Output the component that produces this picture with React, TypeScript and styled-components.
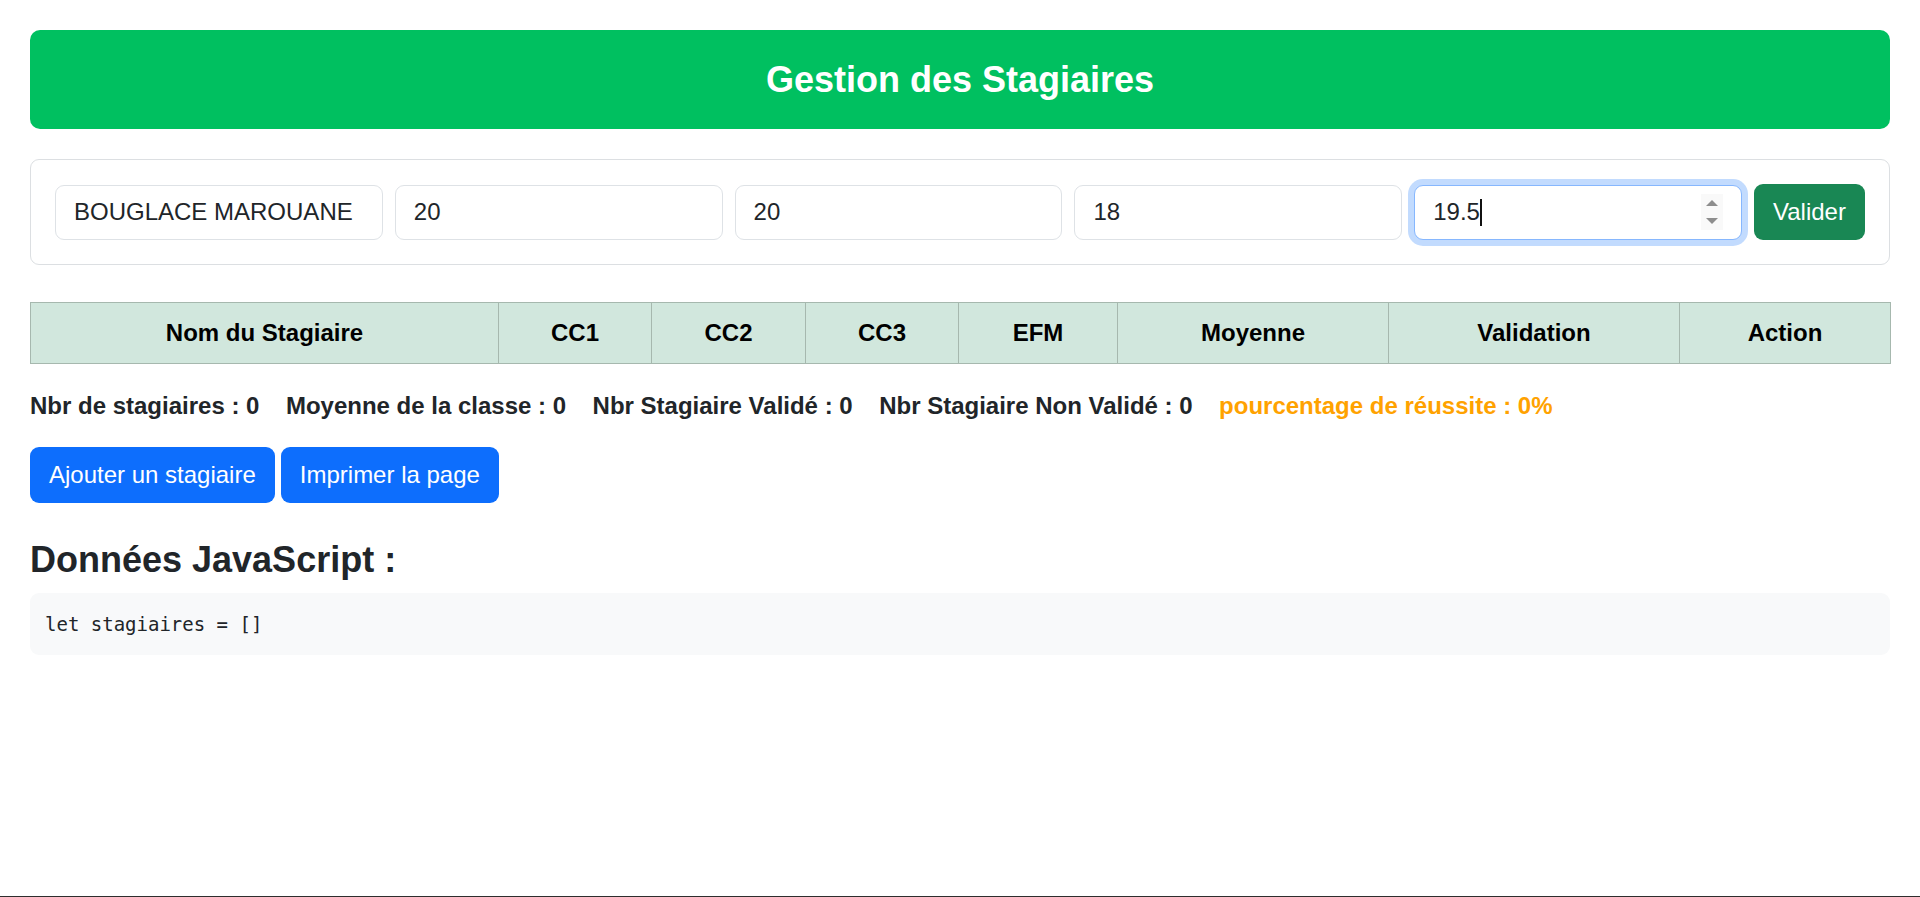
import React from "react";
import styled, { createGlobalStyle } from "styled-components";

const GlobalStyle = createGlobalStyle`
  * { box-sizing: border-box; }
  html, body { margin: 0; padding: 0; background: #ffffff; }
  body {
    font-family: "Liberation Sans", Arial, sans-serif;
    color: #212529;
    font-size: 24px;
    line-height: 1.5;
  }
`;

const Page = styled.div`
  padding: 30px 30px 0 30px;
  display: flex;
  flex-direction: column;
`;

const Banner = styled.header`
  background: #00c060;
  border-radius: 10px;
  padding: 28px 0;
  display: flex;
  justify-content: center;
  align-items: center;
`;

const BannerTitle = styled.h1`
  margin: 0;
  font-size: 36px;
  line-height: 43px;
  font-weight: 700;
  color: #ffffff;
`;

const FormCard = styled.form`
  margin-top: 30px;
  border: 1px solid #dcdfe2;
  border-radius: 9px;
  padding: 24px;
  display: flex;
  gap: 12px;
  align-items: center;
`;

const Field = styled.input`
  flex: 1 1 0;
  min-width: 0;
  height: 55px;
  padding: 0 18px;
  border: 1px solid #dee2e6;
  border-radius: 9px;
  font-family: "Liberation Sans", Arial, sans-serif;
  font-size: 24px;
  color: #212529;
  background: #ffffff;
  outline: none;
`;

const FocusedField = styled.div`
  flex: 1 1 0;
  min-width: 0;
  height: 55px;
  padding: 0 18px;
  border: 1px solid #86b7fe;
  border-radius: 9px;
  box-shadow: 0 0 0 6px rgba(13, 110, 253, 0.25);
  display: flex;
  align-items: center;
  background: #ffffff;
`;

const FieldValue = styled.span`
  font-size: 24px;
  color: #212529;
  line-height: 36px;
`;

const Caret = styled.span`
  width: 2px;
  height: 27px;
  background: #111111;
`;

const Filler = styled.span`
  flex: 1;
`;

const Spinner = styled.span`
  width: 22px;
  height: 36px;
  background: #f9f9f9;
  display: flex;
  flex-direction: column;
  align-items: center;
  justify-content: center;
  gap: 12px;
`;

const Arrow = styled.span<{ $up?: boolean }>`
  width: 0;
  height: 0;
  border-left: 6px solid transparent;
  border-right: 6px solid transparent;
  ${(p) =>
    p.$up
      ? "border-bottom: 6px solid #8d8d8d;"
      : "border-top: 6px solid #8d8d8d;"}
`;

const SubmitButton = styled.button`
  flex: 0 0 111px;
  width: 111px;
  height: 56px;
  padding: 0;
  border: none;
  border-radius: 9px;
  background: #198754;
  color: #ffffff;
  font-family: "Liberation Sans", Arial, sans-serif;
  font-size: 24px;
`;

const Table = styled.table`
  margin-top: 37px;
  width: 100%;
  border-collapse: collapse;
  table-layout: fixed;
`;

const Col = styled.col<{ $w: number }>`
  width: ${(p) => p.$w}px;
`;

const HeadCell = styled.th`
  background: #d1e7dd;
  border: 1px solid #a6b8ae;
  color: #000000;
  font-size: 24px;
  font-weight: 700;
  line-height: 36px;
  padding: 12px 0;
  text-align: center;
`;

const Stats = styled.div`
  margin-top: 24px;
  display: flex;
  gap: 26.5px;
  font-weight: 700;
  font-size: 24px;
  line-height: 36px;
`;

const Stat = styled.span<{ $accent?: boolean }>`
  color: ${(p) => (p.$accent ? "#ffa200" : "#212529")};
`;

const ActionRow = styled.div`
  margin-top: 23px;
  display: flex;
  gap: 6px;
`;

const PrimaryButton = styled.button`
  height: 56px;
  padding: 0 19px;
  border: none;
  border-radius: 9px;
  background: #0d6efd;
  color: #ffffff;
  font-family: "Liberation Sans", Arial, sans-serif;
  font-size: 24px;
`;

const SectionTitle = styled.h2`
  margin: 35px 0 12px 0;
  font-size: 36px;
  line-height: 43px;
  font-weight: 700;
  color: #212529;
`;

const CodeBlock = styled.pre`
  margin: 0;
  background: #f8f9fa;
  border-radius: 9px;
  padding: 15px 15px;
  font-family: "DejaVu Sans Mono", "Liberation Mono", monospace;
  font-size: 19px;
  line-height: 32px;
  color: #212529;
`;

const BottomEdge = styled.div`
  position: fixed;
  left: 0;
  right: 0;
  bottom: 0;
  height: 1px;
  background: #2e2e2e;
`;

const columns: { label: string; w: number }[] = [
  { label: "Nom du Stagiaire", w: 468 },
  { label: "CC1", w: 153 },
  { label: "CC2", w: 154 },
  { label: "CC3", w: 153 },
  { label: "EFM", w: 159 },
  { label: "Moyenne", w: 271 },
  { label: "Validation", w: 291 },
  { label: "Action", w: 211 },
];

export default function App() {
  return (
    <>
      <GlobalStyle />
      <Page>
        <Banner>
          <BannerTitle>Gestion des Stagiaires</BannerTitle>
        </Banner>

        <FormCard onSubmit={(e) => e.preventDefault()}>
          <Field defaultValue="BOUGLACE MAROUANE" />
          <Field defaultValue="20" />
          <Field defaultValue="20" />
          <Field defaultValue="18" />
          <FocusedField>
            <FieldValue>19.5</FieldValue>
            <Caret />
            <Filler />
            <Spinner>
              <Arrow $up />
              <Arrow />
            </Spinner>
          </FocusedField>
          <SubmitButton type="submit">Valider</SubmitButton>
        </FormCard>

        <Table>
          <colgroup>
            {columns.map((c) => (
              <Col key={c.label} $w={c.w} />
            ))}
          </colgroup>
          <thead>
            <tr>
              {columns.map((c) => (
                <HeadCell key={c.label}>{c.label}</HeadCell>
              ))}
            </tr>
          </thead>
        </Table>

        <Stats>
          <Stat>Nbr de stagiaires : 0</Stat>
          <Stat>Moyenne de la classe : 0</Stat>
          <Stat>Nbr Stagiaire Validé : 0</Stat>
          <Stat>Nbr Stagiaire Non Validé : 0</Stat>
          <Stat $accent>pourcentage de réussite : 0%</Stat>
        </Stats>

        <ActionRow>
          <PrimaryButton>Ajouter un stagiaire</PrimaryButton>
          <PrimaryButton>Imprimer la page</PrimaryButton>
        </ActionRow>

        <SectionTitle>Données JavaScript :</SectionTitle>
        <CodeBlock>let stagiaires = []</CodeBlock>
      </Page>
      <BottomEdge />
    </>
  );
}
